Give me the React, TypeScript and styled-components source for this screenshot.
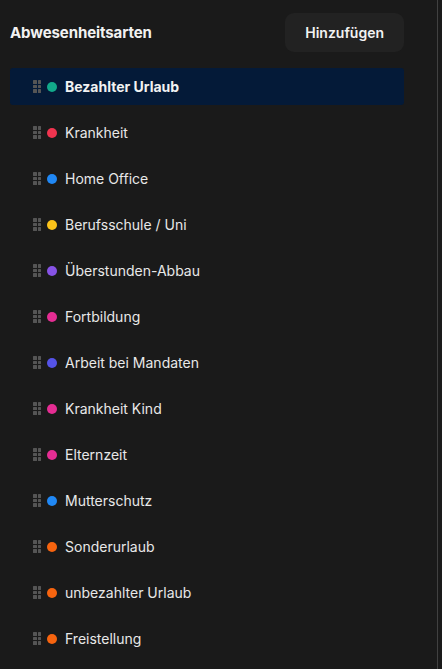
import styled, { createGlobalStyle } from 'styled-components';

const GlobalStyle = createGlobalStyle`
  html, body {
    margin: 0;
    padding: 0;
    background: #1a1a1a;
  }
  body {
    font-family: Inter, "Noto Sans", "Liberation Sans", sans-serif;
  }
`;

const Panel = styled.div`
  width: 438px;
  height: 669px;
  box-sizing: border-box;
  padding: 13px 33px 0 10px;
  background: #1a1a1a;
  border-right: 1px solid #414141;
  overflow: hidden;
`;

const Header = styled.div`
  display: flex;
  align-items: center;
  justify-content: space-between;
  height: 39px;
  margin-bottom: 16px;
`;

const Title = styled.h2`
  margin: 0;
  font-size: 15px;
  font-weight: 700;
  color: #f2f2f2;
  letter-spacing: -0.1px;
`;

const AddButton = styled.button`
  height: 39px;
  padding: 0 20px;
  border: none;
  border-radius: 9px;
  background: #222222;
  color: #f2f2f2;
  font-family: inherit;
  font-size: 14px;
  font-weight: 600;
  cursor: pointer;
`;

const List = styled.div`
  display: flex;
  flex-direction: column;
  gap: 9px;
`;

const Row = styled.div<{ $active?: boolean }>`
  display: flex;
  align-items: center;
  height: 37px;
  padding-left: 23px;
  border-radius: 3px;
  background: ${(p) => (p.$active ? '#041a38' : 'transparent')};
`;

const Handle = styled.div`
  display: grid;
  grid-template-columns: repeat(2, 3.5px);
  grid-template-rows: repeat(3, 3.5px);
  gap: 1px;
  margin-right: 6px;
  span {
    background: #555555;
    border-radius: 0.5px;
  }
`;

const Dot = styled.span<{ $color: string }>`
  width: 10px;
  height: 10px;
  border-radius: 50%;
  background: ${(p) => p.$color};
  margin-right: 8px;
  flex-shrink: 0;
`;

const Label = styled.span<{ $active?: boolean }>`
  font-size: 14px;
  font-weight: ${(p) => (p.$active ? 700 : 400)};
  color: ${(p) => (p.$active ? '#f2f2f2' : '#e8e8e8')};
`;

const types = [
  { name: 'Bezahlter Urlaub', color: '#12a98b' },
  { name: 'Krankheit', color: '#f0344f' },
  { name: 'Home Office', color: '#2088f5' },
  { name: 'Berufsschule / Uni', color: '#fbc31a' },
  { name: 'Überstunden-Abbau', color: '#8753e6' },
  { name: 'Fortbildung', color: '#e52d93' },
  { name: 'Arbeit bei Mandaten', color: '#5553e8' },
  { name: 'Krankheit Kind', color: '#e52d93' },
  { name: 'Elternzeit', color: '#e52d93' },
  { name: 'Mutterschutz', color: '#2088f5' },
  { name: 'Sonderurlaub', color: '#f7640f' },
  { name: 'unbezahlter Urlaub', color: '#f7640f' },
  { name: 'Freistellung', color: '#f7640f' },
];

export default function App() {
  return (
    <>
      <GlobalStyle />
      <Panel>
        <Header>
          <Title>Abwesenheitsarten</Title>
          <AddButton>Hinzufügen</AddButton>
        </Header>
        <List>
          {types.map((t, i) => (
            <Row key={t.name} $active={i === 0}>
              <Handle>
                {Array.from({ length: 6 }).map((_, k) => (
                  <span key={k} />
                ))}
              </Handle>
              <Dot $color={t.color} />
              <Label $active={i === 0}>{t.name}</Label>
            </Row>
          ))}
        </List>
      </Panel>
    </>
  );
}
